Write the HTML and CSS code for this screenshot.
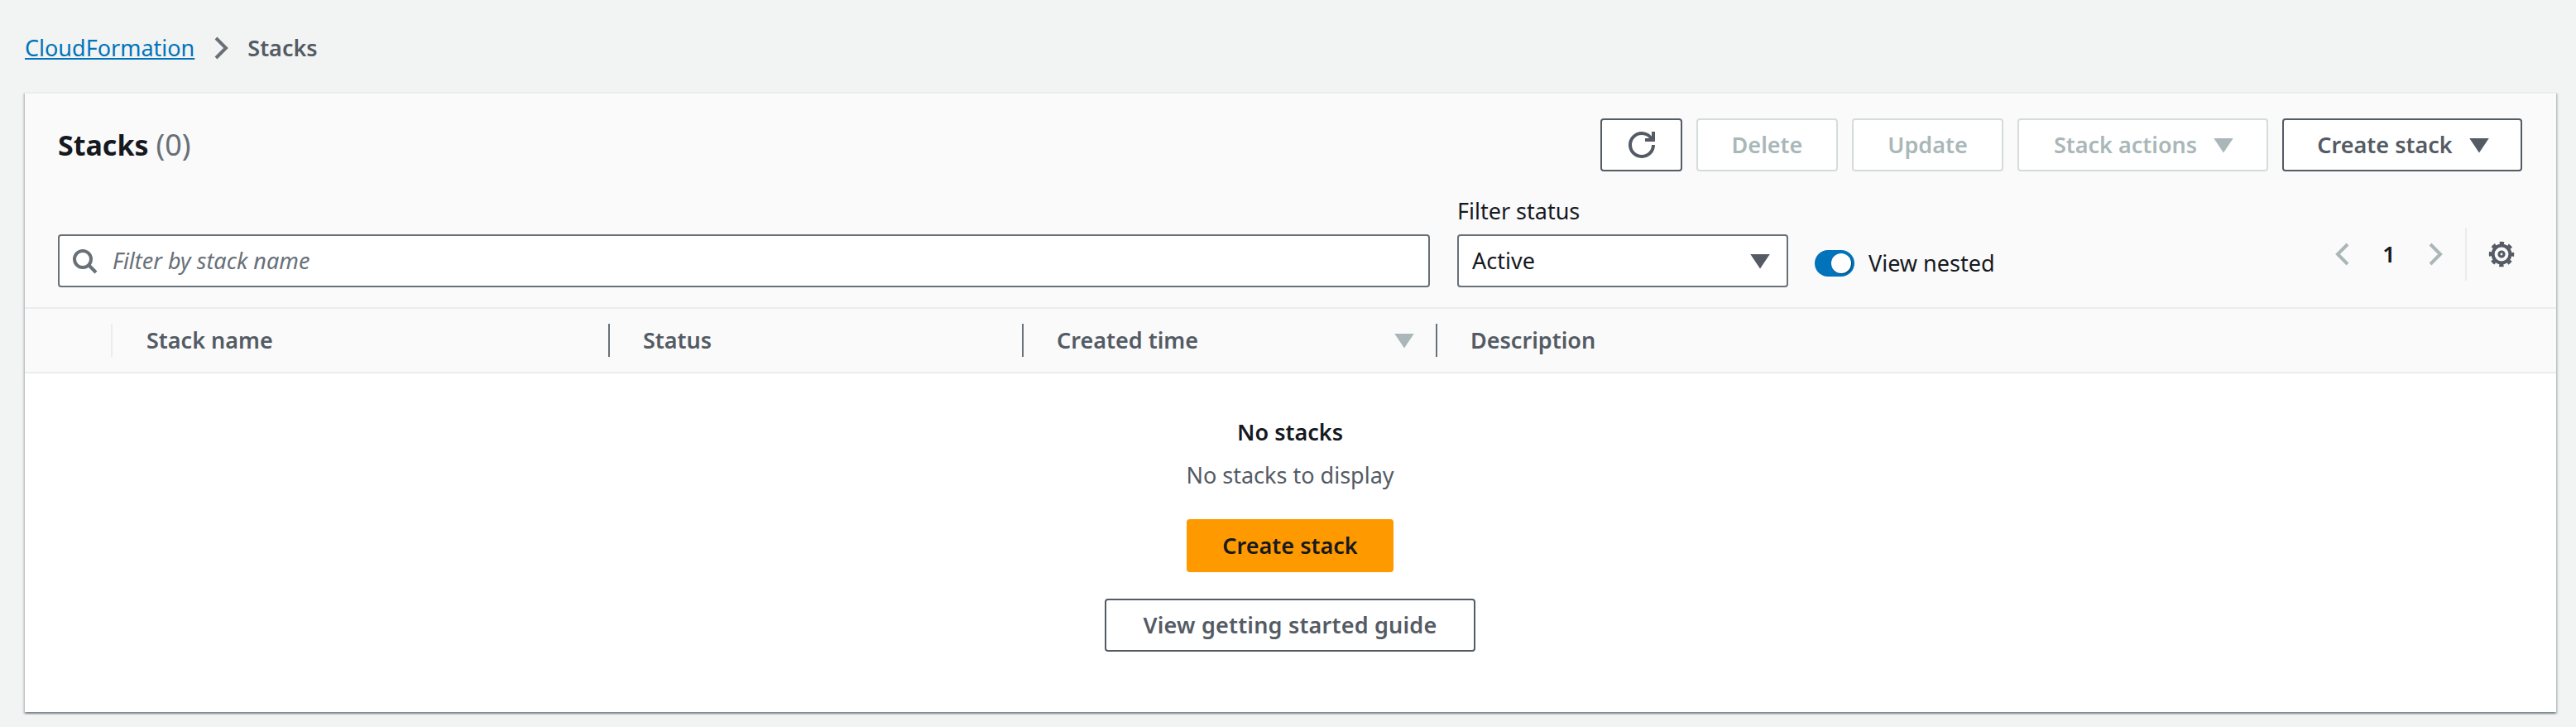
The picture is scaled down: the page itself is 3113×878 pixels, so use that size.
FILE: index.html
```html
<!DOCTYPE html>
<html lang="en">
<head>
  <meta charset="UTF-8">
  <title>CloudFormation - Stacks</title>
  <link rel="stylesheet" href="styles.css">
</head>
<body>
  <nav class="breadcrumb">
    <a href="#" class="crumb-link">CloudFormation</a>
    <svg class="crumb-sep" viewBox="0 0 16 16"><path d="M5 2l6 6-6 6"/></svg>
    <span class="crumb-current">Stacks</span>
  </nav>

  <section class="card">
    <div class="card-header">
      <div class="title-row">
        <h2 class="title">Stacks <span class="counter">(0)</span></h2>
        <div class="actions">
          <button class="btn btn-refresh" aria-label="Refresh">
            <svg class="icon" viewBox="0 0 16 16"><path d="M10 5h5V0"/><path d="M15 8a6.95 6.95 0 0 1-7 7 6.95 6.95 0 0 1-7-7 6.95 6.95 0 0 1 7-7 6.8 6.8 0 0 1 6.3 4"/></svg>
          </button>
          <button class="btn btn-delete" disabled>Delete</button>
          <button class="btn btn-update" disabled>Update</button>
          <button class="btn btn-stack-actions" disabled>Stack actions
            <svg class="caret" viewBox="0 0 16 16"><path d="M4 5h8l-4 6-4-6z"/></svg>
          </button>
          <button class="btn btn-create">Create stack
            <svg class="caret" viewBox="0 0 16 16"><path d="M4 5h8l-4 6-4-6z"/></svg>
          </button>
        </div>
      </div>

      <div class="filter-row">
        <div class="search-box">
          <svg class="icon" viewBox="0 0 16 16"><circle cx="7" cy="7" r="5"/><path d="M15 15l-4.5-4.5"/></svg>
          <input type="text" class="search-input" placeholder="Filter by stack name">
        </div>
        <div class="status-filter">
          <label class="status-label">Filter status</label>
          <div class="select">
            <span>Active</span>
            <svg class="caret" viewBox="0 0 16 16"><path d="M4 5h8l-4 6-4-6z"/></svg>
          </div>
        </div>
        <div class="nested">
          <span class="toggle"><span class="toggle-handle"></span></span>
          <span>View nested</span>
        </div>
        <div class="pager">
          <svg class="icon chevron" viewBox="0 0 16 16"><path d="M11 2L5 8l6 6"/></svg>
          <span class="page-num">1</span>
          <svg class="icon chevron" viewBox="0 0 16 16"><path d="M5 2l6 6-6 6"/></svg>
          <span class="pager-divider"></span>
          <svg class="icon gear" viewBox="0 0 16 16">
            <circle cx="8" cy="8" r="1.5" stroke-width="1.6"/>
            <circle cx="8" cy="8" r="5.2"/>
            <circle cx="8" cy="8" r="6.8" stroke-width="1.6" stroke-dasharray="2.7 2.64" stroke-dashoffset="1.35"/>
          </svg>
        </div>
      </div>
    </div>

    <div class="table-head">
      <div class="th th-select"></div>
      <div class="th th-first">Stack name</div>
      <div class="th">Status</div>
      <div class="th th-sorted">Created time
        <svg class="caret" viewBox="0 0 16 16"><path d="M4 5h8l-4 6-4-6z"/></svg>
      </div>
      <div class="th">Description</div>
    </div>

    <div class="empty">
      <div class="empty-title">No stacks</div>
      <div class="empty-text">No stacks to display</div>
      <button class="btn btn-primary">Create stack</button>
      <button class="btn btn-guide">View getting started guide</button>
    </div>
  </section>
</body>
</html>
```

FILE: styles.css
```css
* {
  box-sizing: border-box;
}

html, body {
  margin: 0;
  padding: 0;
}

body {
  width: 3113px;
  height: 878px;
  overflow: hidden;
  padding: 0 24px 0 30px;
  background-color: #f2f3f3;
  color: #16191f;
  font-family: "Noto Sans", sans-serif;
  font-size: 27px;
  line-height: 40px;
}

svg {
  display: block;
  flex: none;
  fill: none;
  stroke: currentColor;
  stroke-width: 2;
}

.breadcrumb {
  display: flex;
  align-items: center;
  height: 111px;
  padding-top: 5px;
}

.crumb-link {
  color: #0073bb;
}

.crumb-sep {
  width: 32px;
  height: 32px;
  margin: 0 16px 0 16px;
  color: #687078;
}

.crumb-current {
  color: #545b64;
  font-weight: 650;
}

.card {
  height: 749px;
  border-top: 2px solid #eaeded;
  background-color: #fff;
  box-shadow: 0 2px 2px 0 rgba(0, 28, 36, 0.3), 2px 2px 2px 0 rgba(0, 28, 36, 0.15), -2px 2px 2px 0 rgba(0, 28, 36, 0.15);
}

.card-header {
  height: 260px;
  padding: 30px 41px 24px 40px;
  border-bottom: 2px solid #eaeded;
  background-color: #fafafa;
}

.title-row {
  display: flex;
  justify-content: space-between;
  align-items: center;
  height: 64px;
}

.title {
  margin: 0;
  font-size: 34px;
  font-weight: 700;
  line-height: 48px;
}

.counter {
  color: #687078;
  font-size: 36px;
  font-weight: 400;
}

.actions {
  display: flex;
  gap: 17px;
}

.btn {
  display: flex;
  justify-content: center;
  align-items: center;
  height: 64px;
  padding: 0;
  border: 2px solid #545b64;
  border-radius: 4px;
  background-color: #fff;
  color: #545b64;
  font: inherit;
  font-weight: 650;
}

.btn:disabled {
  border-color: #d5dbdb;
  color: #aab7b8;
}

.btn-refresh {
  width: 99px;
}

.btn-delete {
  width: 171px;
}

.btn-update {
  width: 183px;
}

.btn-stack-actions {
  width: 303px;
  padding-left: 6px;
  gap: 16px;
}

.btn-create {
  width: 290px;
  padding-left: 6px;
  gap: 16px;
}

.icon {
  width: 32px;
  height: 32px;
}

.caret {
  width: 32px;
  height: 32px;
  fill: currentColor;
}

.filter-row {
  display: flex;
  align-items: flex-end;
  margin-top: 28px;
}

.search-box {
  display: flex;
  align-items: center;
  gap: 18px;
  width: 1658px;
  height: 64px;
  padding: 0 14px;
  border: 2px solid #687078;
  border-radius: 4px;
  background-color: #fff;
  color: #687078;
}

.search-input {
  flex: 1;
  border: none;
  outline: none;
  padding: 0;
  background: none;
  font: inherit;
}

.search-input::placeholder {
  color: #687078;
  font-style: italic;
  opacity: 1;
}

.status-filter {
  width: 400px;
  margin-left: 33px;
}

.status-label {
  display: block;
  margin-bottom: 8px;
}

.select {
  display: flex;
  justify-content: space-between;
  align-items: center;
  height: 64px;
  padding: 0 16px;
  border: 2px solid #687078;
  border-radius: 4px;
  background-color: #fff;
}

.select .caret {
  color: #545b64;
}

.nested {
  display: flex;
  align-items: center;
  gap: 17px;
  height: 64px;
  margin-left: 32px;
  padding-top: 5px;
}

.toggle {
  display: flex;
  justify-content: flex-end;
  align-items: center;
  width: 48px;
  height: 32px;
  padding: 0 4px;
  border-radius: 16px;
  background-color: #0073bb;
}

.toggle-handle {
  width: 24px;
  height: 24px;
  border-radius: 50%;
  background-color: #fff;
  box-shadow: 1px 1px 1px rgba(0, 28, 36, 0.5);
}

.pager {
  display: flex;
  align-items: center;
  height: 64px;
  margin-left: auto;
  margin-bottom: 8px;
  padding-right: 9px;
}

.chevron {
  color: #aab7b8;
}

.page-num {
  width: 80px;
  text-align: center;
  font-weight: 650;
}

.pager-divider {
  width: 2px;
  height: 64px;
  margin: 0 26px 0 20px;
  background-color: #eaeded;
}

.gear {
  color: #545b64;
}

.table-head {
  display: grid;
  grid-template-columns: 106px 599px 500px 500px 1fr;
  align-items: center;
  height: 78px;
  border-bottom: 2px solid #eaeded;
  background-color: #fafafa;
  color: #545b64;
  font-weight: 650;
}

.th {
  height: 40px;
  padding-left: 40px;
  border-left: 2px solid #687078;
}

.th-select {
  padding: 0;
  border-left: none;
  border-right: 2px solid #eaeded;
}

.th-first {
  padding-left: 41px;
  border-left: none;
}

.th-sorted {
  display: flex;
  justify-content: space-between;
  align-items: center;
  padding-right: 22px;
}

.th-sorted .caret {
  color: #aab7b8;
}

.empty {
  display: flex;
  flex-direction: column;
  align-items: center;
  padding: 51px 1px 0 0;
}

.empty-title {
  font-weight: 650;
}

.empty-text {
  margin-top: 12px;
  color: #545b64;
}

.btn-primary {
  width: 250px;
  margin-top: 33px;
  border-color: #ff9900;
  background-color: #ff9900;
  color: #16191f;
}

.btn-guide {
  width: 448px;
  margin-top: 32px;
  letter-spacing: 0.2px;
}
```
